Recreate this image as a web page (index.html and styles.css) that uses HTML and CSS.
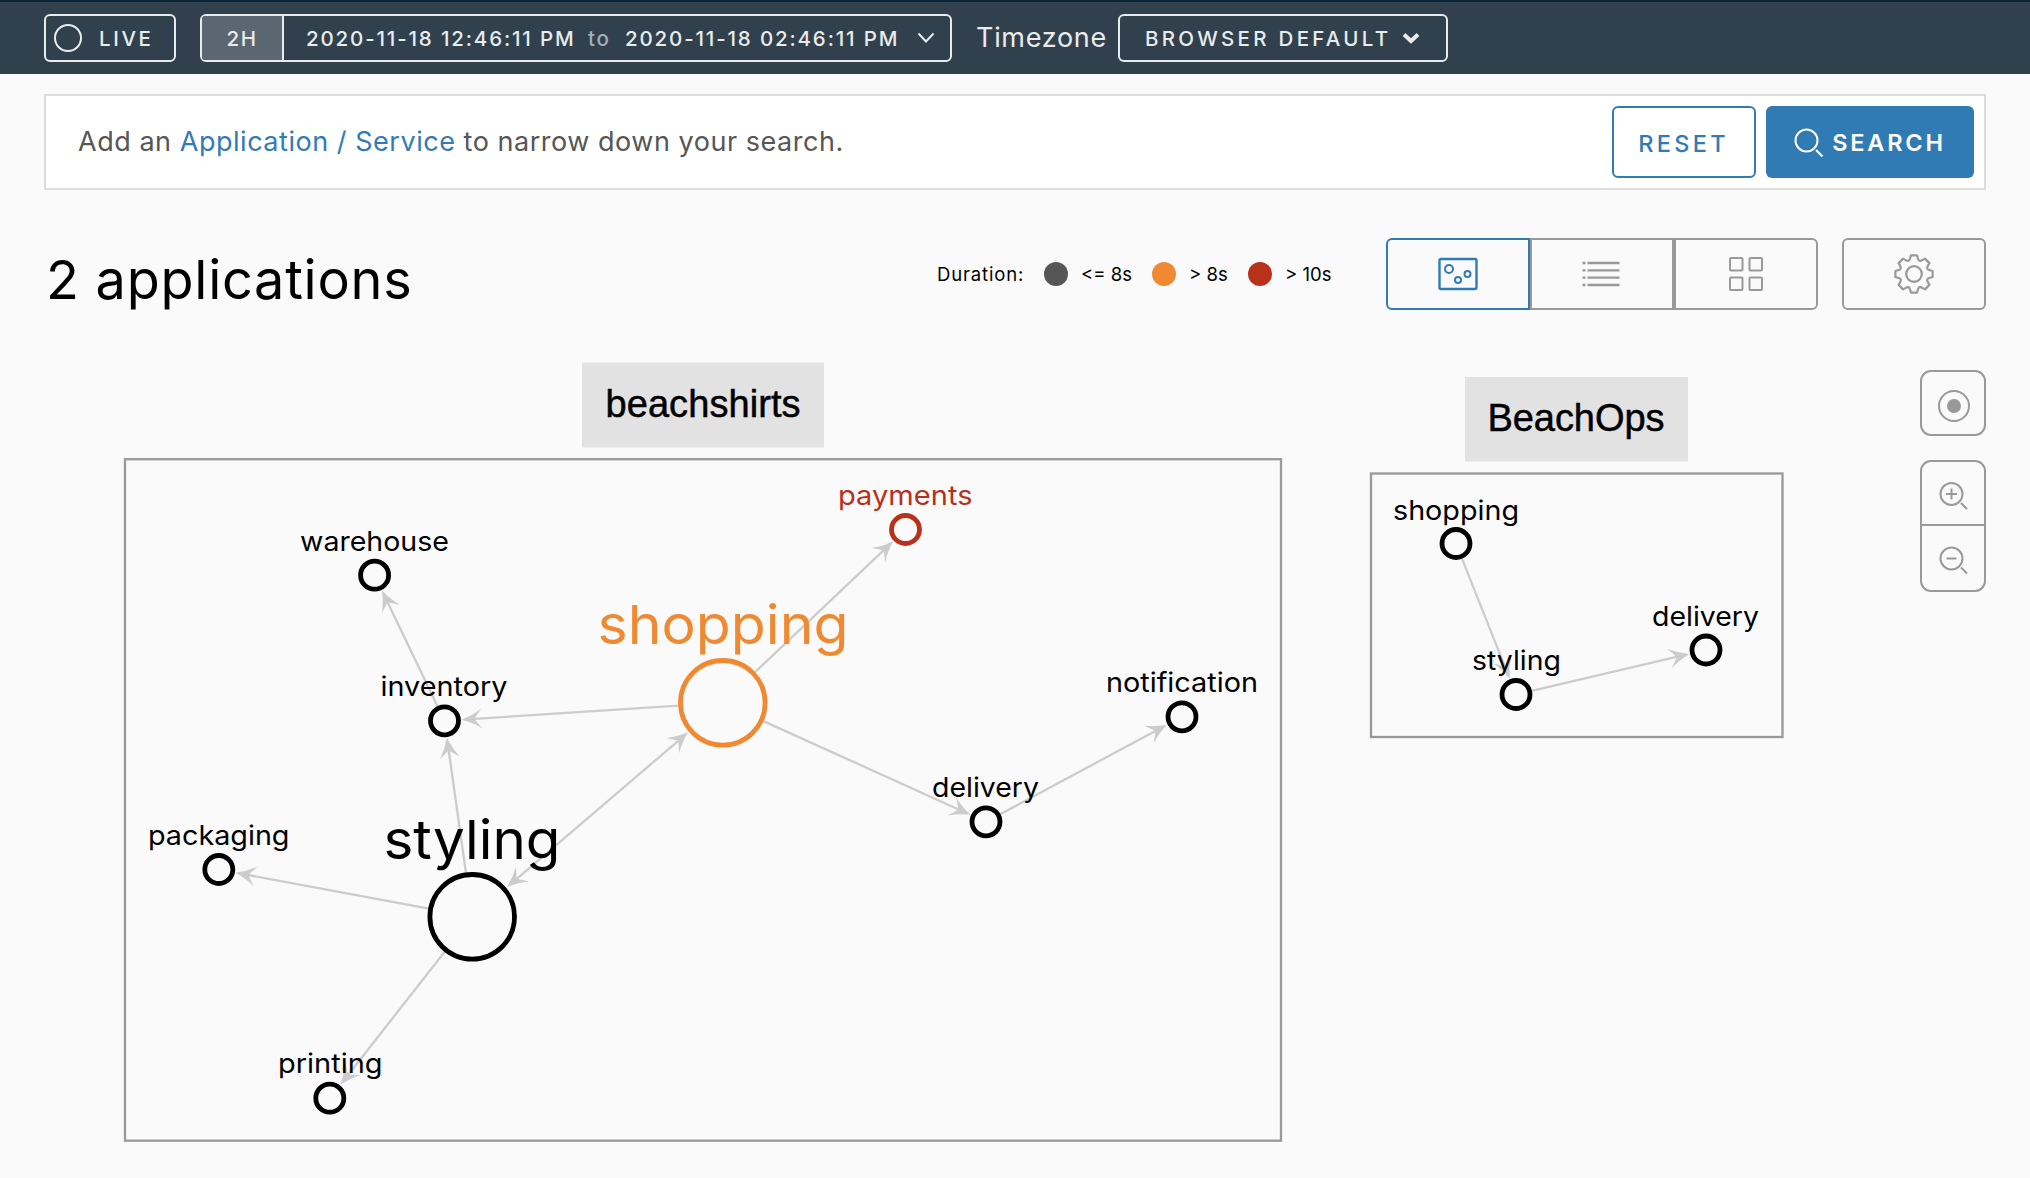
FILE: index.html
```html
<!DOCTYPE html>
<html lang="en">
<head>
<meta charset="utf-8">
<title>Application Map</title>
<link rel="stylesheet" href="styles.css">
</head>
<body>
<header class="topbar">
  <button class="outline live"><span class="live-dot"></span><span class="live-text">LIVE</span></button>
  <div class="outline range">
    <span class="preset">2H</span>
    <span class="date from">2020-11-18 12:46:11 PM</span>
    <span class="to">to</span>
    <span class="date until">2020-11-18 02:46:11 PM</span>
    <svg class="chev" width="18" height="12" viewBox="0 0 18 12"><path d="M1.5 1.5 9 9.500l7.500-8" fill="none" stroke="currentColor" stroke-width="2"/></svg>
  </div>
  <span class="tz-label">Timezone</span>
  <button class="outline tz"><span class="tz-text">BROWSER DEFAULT</span><svg width="18" height="13" viewBox="0 0 18 13"><path d="M2 2.500 9 9l7-6.500" fill="none" stroke="currentColor" stroke-width="4"/></svg></button>
</header>

<main>
  <section class="searchbar">
    <p class="hint">Add an <a>Application / Service</a> to narrow down your search.</p>
    <button class="reset">RESET</button>
    <button class="search"><svg width="30" height="30" viewBox="0 0 30 30" fill="none" stroke="currentColor" stroke-width="2"><circle cx="12.500" cy="12.500" r="11"/><path d="m22 22 6.500 6.500" stroke-width="2.200"/></svg><span>SEARCH</span></button>
  </section>

  <section class="toolbar">
    <h1>2 applications</h1>
    <div class="legend">
      <span class="l0">Duration:</span>
      <i class="dot ok"></i><span class="l1">&lt;= 8s</span>
      <i class="dot warn"></i><span class="l2">&gt; 8s</span>
      <i class="dot bad"></i><span class="l3">&gt; 10s</span>
    </div>
    <div class="views">
      <button class="view active"><svg width="40" height="34" viewBox="0 0 40 34" fill="none" stroke="currentColor" stroke-width="2"><rect x="1.500" y="2" width="37" height="30" rx="1.500" stroke-width="2.400"/><circle cx="11" cy="12" r="4"/><circle cx="29.500" cy="17" r="3"/><circle cx="20" cy="23" r="3"/></svg></button>
      <button class="view"><svg class="list" width="38" height="26" viewBox="0 0 38 26" stroke="currentColor" stroke-width="2.300"><path d="M.5 2h3M.5 9.330h3M.5 16.670h3M.5 24h3M5.500 2h32M5.500 9.330h32M5.500 16.670h32M5.500 24h32"/></svg></button>
      <button class="view"><svg width="34" height="34" viewBox="0 0 34 34" fill="none" stroke="currentColor" stroke-width="2"><rect x="1" y="1" width="12.500" height="12.500" rx="1"/><rect x="20.500" y="1" width="12.500" height="12.500" rx="1"/><rect x="1" y="20.500" width="12.500" height="12.500" rx="1"/><rect x="20.500" y="20.500" width="12.500" height="12.500" rx="1"/></svg></button>
    </div>
    <button class="gear"><svg width="40" height="40" viewBox="-20 -20 40 40" fill="none" stroke="currentColor" stroke-width="2.200" stroke-linejoin="round"><circle r="7.800"/><path d="M-3-18.600h6l1.300 4.100q.4 1.200 1.700 1.300 1.100.1 2.200-.7L10.900-15.400 15.400-10.900 13.900-8.200q-.8 1.100-.7 2.200.1 1.300 1.300 1.700L18.600-3v6l-4.100 1.300q-1.200.4-1.300 1.700-.1 1.100.7 2.200L15.400 10.900 10.900 15.400 8.200 13.900q-1.100-.8-2.200-.7-1.300.1-1.700 1.300L3 18.600h-6l-1.300-4.100q-.4-1.200-1.700-1.300-1.100-.1-2.200.7L-10.900 15.400-15.400 10.900-13.900 8.200q.8-1.100.7-2.200-.1-1.300-1.300-1.700L-18.600 3v-6l4.100-1.300q1.200-.4 1.300-1.700.1-1.100-.7-2.200L-15.400-10.900-10.900-15.400-8.200-13.900q1.100.8 2.200.7 1.300-.1 1.700-1.300z"/></svg></button>
  </section>

  <section class="canvas">
    <svg class="graph" width="2030" height="868" viewBox="0 309.500 2030 868">
      <defs>
        <marker id="arrow" markerUnits="userSpaceOnUse" markerWidth="24" markerHeight="24" viewBox="-12 -12 24 24" refX="0" refY="0" orient="auto-start-reverse"><path class="head" d="M10 0Q-2-4-10.500-10L-3 0-10.500 10Q-2 4 10 0Z"/></marker>
      </defs>
      <rect class="group" x="125" y="458.700" width="1156" height="681.500"/>
      <rect class="group" x="1371" y="473" width="411.500" height="263.500"/>
      <rect class="tag" x="582" y="362" width="242" height="85"/>
      <rect class="tag" x="1465" y="376.500" width="223" height="84.500"/>
      <text class="tag-text" x="605.500" y="416.500" textLength="195">beachshirts</text>
      <text class="tag-text" x="1487.500" y="430.500" textLength="177">BeachOps</text>

      <g class="edges">
        <path d="M437.600 705.900 386.300 599"/>
        <path d="M678.900 705.100 471.400 718.600"/>
        <path d="M754.700 672 885.900 547.600"/>
        <path d="M762.900 720.400 961.400 810.200"/>
        <path d="M1000.100 813.700 1158.200 729"/>
        <path d="M466 872.700 448.300 747"/>
        <path d="M428.900 908.200 245.300 874"/>
        <path d="M445 950.900 346.500 1076.500"/>
        <path class="both" d="M514.400 880.300 680.600 738.300"/>
        <path d="M1461.900 557.900 1506 668.900"/>
        <path d="M1531.600 690.400 1679.700 655.700"/>
      </g>

      <g class="nodes">
        <circle cx="374.600" cy="574.700" r="14"/>
        <circle cx="444.500" cy="720.300" r="14"/>
        <circle class="bad" cx="905.500" cy="529" r="14"/>
        <circle class="warn" cx="722.800" cy="702.300" r="42.300"/>
        <circle cx="1182" cy="716.300" r="14"/>
        <circle cx="986" cy="821.300" r="14"/>
        <circle cx="218.800" cy="869" r="14"/>
        <circle cx="472.200" cy="916.300" r="42.300"/>
        <circle cx="329.800" cy="1097.700" r="14"/>
        <circle cx="1456" cy="543" r="14"/>
        <circle cx="1516" cy="694" r="14"/>
        <circle cx="1706" cy="649.500" r="14"/>
      </g>

      <g class="labels">
        <text x="300" y="550" textLength="149" lengthAdjust="spacingAndGlyphs">warehouse</text>
        <text x="380.500" y="695.700" textLength="127" lengthAdjust="spacingAndGlyphs">inventory</text>
        <text class="bad" x="838" y="504" textLength="134.500" lengthAdjust="spacingAndGlyphs">payments</text>
        <text class="warn big" x="597.500" y="643.700" textLength="251" lengthAdjust="spacingAndGlyphs">shopping</text>
        <text x="1106" y="691.700" textLength="152" lengthAdjust="spacingAndGlyphs">notification</text>
        <text x="932" y="796.700" textLength="107" lengthAdjust="spacingAndGlyphs">delivery</text>
        <text x="148" y="844" textLength="141.500" lengthAdjust="spacingAndGlyphs">packaging</text>
        <text class="big" x="383.500" y="858" textLength="177" lengthAdjust="spacingAndGlyphs">styling</text>
        <text x="278" y="1072.700" textLength="104.500" lengthAdjust="spacingAndGlyphs">printing</text>
        <text x="1393" y="519" textLength="126" lengthAdjust="spacingAndGlyphs">shopping</text>
        <text x="1472" y="669" textLength="89" lengthAdjust="spacingAndGlyphs">styling</text>
        <text x="1652" y="625" textLength="107" lengthAdjust="spacingAndGlyphs">delivery</text>
      </g>
    </svg>
    <div class="controls">
      <button class="ctl"><svg width="36" height="36" viewBox="0 0 36 36"><circle cx="19" cy="21" r="15" fill="none" stroke="currentColor" stroke-width="2"/><circle cx="19" cy="21" r="7" fill="currentColor"/></svg></button>
      <div class="zoom">
        <button><svg width="32" height="32" viewBox="0 0 32 32" fill="none" stroke="currentColor" stroke-width="2"><circle cx="14.500" cy="17" r="11"/><path d="M9 17h11M14.500 11.500v11M24 26l6 6"/></svg></button>
        <button><svg width="32" height="32" viewBox="0 0 32 32" fill="none" stroke="currentColor" stroke-width="2"><circle cx="14.500" cy="16.500" r="11"/><path d="M9.500 16.500h10M24 25.500l6 6"/></svg></button>
      </div>
    </div>
  </section>
</main>
</body>
</html>
```
FILE: styles.css
```css
* { box-sizing: border-box; }

body {
  margin: 0;
  background: #fafafa;
  color: #000;
  font-family: Inter, "Liberation Sans", sans-serif;
  overflow: hidden;
}

button {
  font: inherit;
  color: inherit;
  background: none;
  border: 0;
  padding: 0;
  display: flex;
  align-items: center;
  justify-content: center;
}

svg { display: block; flex: none; overflow: visible; }

.topbar {
  height: 74px;
  padding: 12px 44px 0;
  border-top: 2px solid #0b2538;
  background: #30414d;
  color: #e9ebed;
  display: flex;
  align-items: flex-start;
  white-space: nowrap;
}

.outline {
  height: 48px;
  border: 2px solid #e9ebed;
  border-radius: 6px;
  display: flex;
  align-items: center;
  font-size: 20.500px;
  font-weight: 500;
}

.live { width: 132px; margin-right: 24px; justify-content: flex-start; padding-left: 8px; }
.live-dot { width: 28px; height: 28px; border: 2px solid currentColor; border-radius: 50%; margin-right: 17px; }
.live-text { letter-spacing: 2.600px; }

.range { width: 752px; margin-right: 24px; }
.preset {
  width: 82px;
  height: 100%;
  border-right: 2px solid #e9ebed;
  background: #5a6772;
  border-radius: 3px 0 0 3px;
  display: flex;
  align-items: center;
  justify-content: center;
  letter-spacing: 1.500px;
}
.date { letter-spacing: 1.850px; }
.from { width: 268px; margin-left: 22px; }
.to { width: 24px; margin: 0 13px 0 14px; letter-spacing: 1.800px; color: #a3afb7; }
.until { width: 275px; }
.chev { margin-left: 17px; }

.tz-label { font-size: 27px; line-height: 48px; width: 142px; letter-spacing: .7px; }
.tz { width: 330px; padding-left: 25px; justify-content: flex-start; }
.tz-text { width: 257px; text-align: left; letter-spacing: 3.300px; }

.searchbar {
  height: 96px;
  margin: 20px 44px 0;
  padding: 0 10px 0 32px;
  border: 2px solid #ddd;
  background: #fff;
  display: flex;
  align-items: center;
}
.hint { flex: 1; margin: 0; font-size: 27px; letter-spacing: .53px; color: #565656; line-height: 40px; white-space: nowrap; }
.hint a { color: #317bb5; }

.reset, .search { height: 72px; border-radius: 6px; font-size: 23.500px; font-weight: 500; }
.reset { width: 144px; border: 2px solid #317bb5; color: #317bb5; letter-spacing: 3.300px; margin-right: 10px; padding: 2px 1px 0 0; }
.search { width: 208px; background: #317bb5; color: #fff; letter-spacing: 2.800px; gap: 8px; font-weight: 600; padding-top: 1px; }

.toolbar {
  height: 72px;
  margin: 48px 44px 0;
  display: flex;
  align-items: center;
}
h1 { flex: 1; margin: 12px 0 0 2px; font-size: 54px; letter-spacing: .75px; font-weight: 400; line-height: 66px; }

.legend { display: flex; align-items: center; font-size: 18.500px; width: 449px; white-space: nowrap; }
.dot { width: 24px; height: 24px; border-radius: 50%; margin-right: 13px; }
.l0 { width: 107px; letter-spacing: .85px; }
.l1 { width: 71px; }
.l2 { width: 59px; }
.dot.ok { background: #565656; }
.dot.warn { background: #f08a32; }
.dot.bad { background: #b8311b; }

.views { display: flex; color: #999; }
.view, .gear { width: 144px; height: 72px; border: 2px solid #999; }
.view:first-child { border-radius: 6px 0 0 6px; }
.view:last-child { border-radius: 0 6px 6px 0; }
.view.active { color: #317bb5; border-color: #317bb5; }
.list { margin-right: 3px; }
.gear { margin-left: 24px; border-radius: 6px; color: #999; }

.canvas { position: relative; }

.group { fill: none; stroke: #999; stroke-width: 2.300; }
.tag { fill: #e2e2e2; }
.tag-text { font: 38px "Liberation Sans", Arial, sans-serif; stroke: #000; stroke-width: .5; }
.head { fill: #ccc; }
.edges path { fill: none; stroke: #ccc; stroke-width: 2.300; }
.edges > path { marker-end: url(#arrow); }
.edges > .both { marker-start: url(#arrow); }
.nodes circle { fill: none; stroke: #000; stroke-width: 4.800; }
.nodes .bad { stroke: #b8311b; }
.nodes .warn { stroke: #f08a32; }
.labels { font-size: 27px; }
.labels .big { font-size: 54px; }
.labels .bad { fill: #b8311b; }
.labels .warn { fill: #f08a32; }

.controls { position: absolute; top: 60px; right: 44px; width: 66px; color: #999; }
.ctl { width: 66px; height: 66px; border: 2px solid #999; border-radius: 11px; }
.zoom { margin-top: 24px; height: 132px; border: 2px solid #999; border-radius: 11px; }
.zoom button { width: 62px; height: 64px; }
.zoom button:first-child { border-bottom: 2px solid #999; }
```
